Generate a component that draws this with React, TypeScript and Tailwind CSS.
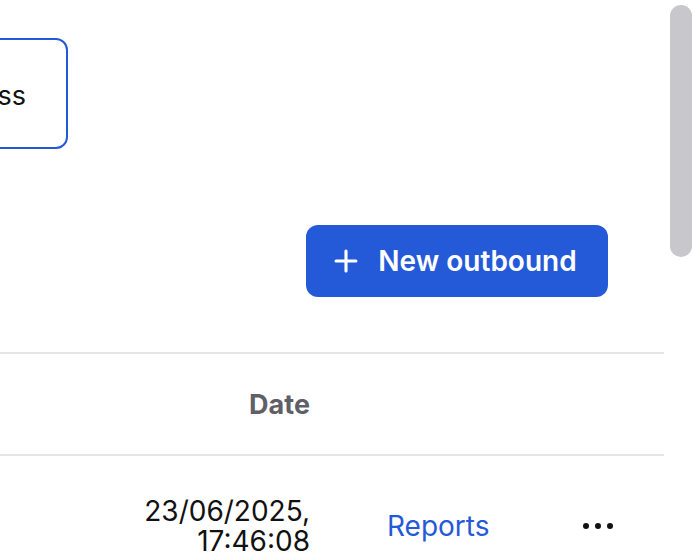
import { Plus } from 'lucide-react';

export default function App() {
  return (
    <div className="relative h-[554px] w-[694px] overflow-hidden bg-white font-['Inter',sans-serif] text-[#111]">
      {/* overlay scrollbar */}
      <div className="absolute right-[2px] top-[5px] h-[252px] w-[22px] rounded-full bg-[#c7c7cc]" />

      <div className="w-[664px]">
        <div className="pt-[38px]">
          <div className="ml-[-200px] flex h-[111px] w-[268px] items-center justify-end rounded-[12px] border-2 border-[#2459d8] pr-[40px] pt-[4px]">
            <span className="text-[27px] leading-none">Business</span>
          </div>
        </div>

        <div className="mt-[76px] flex justify-end pr-[56px]">
          <button className="flex h-[72px] w-[302px] items-center justify-center gap-[15px] rounded-[12px] bg-[#2459d8] pr-[8px] text-[28px] font-semibold text-white">
            <Plus size={34} strokeWidth={2.2} />
            New outbound
          </button>
        </div>

        <div className="mt-[55px] border-t-2 border-[#e6e6e8]">
          <div className="flex h-[100px] items-center">
            <div className="w-[310px] pt-[2px] text-right text-[27px] font-bold text-[#5f5f68]">Date</div>
          </div>
          <div className="flex border-t-2 border-[#e6e6e8] pt-[40px]">
            <div className="w-[310px] text-right text-[28px] leading-[30px]">
              23/06/2025,
              <br />
              17:46:08
            </div>
            <div className="ml-[77px] flex items-center text-[28px] text-[#2459d8]">Reports</div>
            <div className="ml-[93px] flex items-center gap-[6px]">
              <span className="h-[6px] w-[6px] rounded-full bg-[#111]" />
              <span className="h-[6px] w-[6px] rounded-full bg-[#111]" />
              <span className="h-[6px] w-[6px] rounded-full bg-[#111]" />
            </div>
          </div>
        </div>
      </div>
    </div>
  );
}
